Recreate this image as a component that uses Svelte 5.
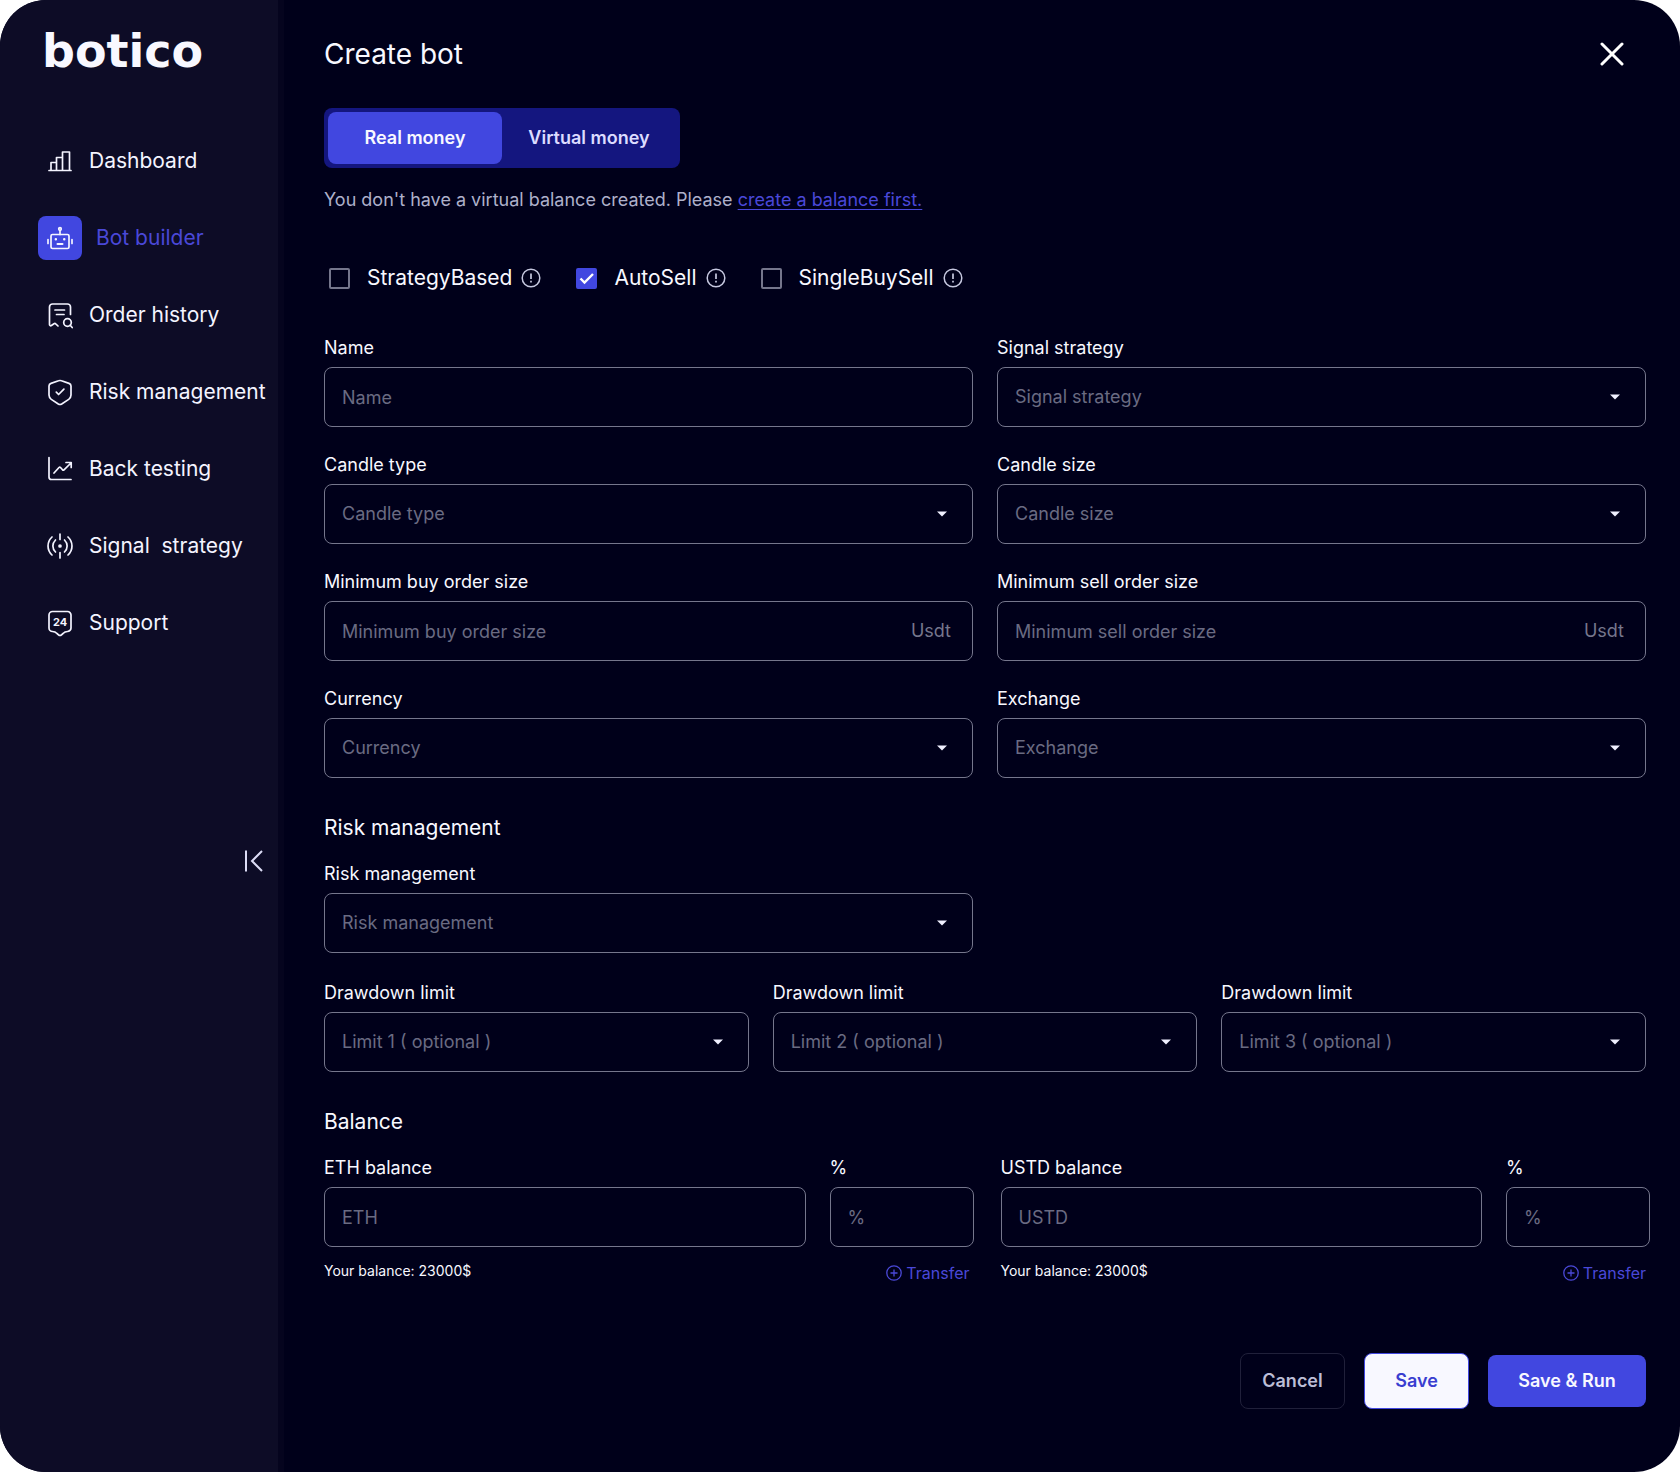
<script>
  let money = "real";
  let active = "bot";

  const menu = [
    { id: "dashboard", label: "Dashboard" },
    { id: "bot", label: "Bot builder" },
    { id: "history", label: "Order history" },
    { id: "risk", label: "Risk management" },
    { id: "testing", label: "Back testing" },
    { id: "signal", label: "Signal \u00a0strategy" },
    { id: "support", label: "Support" },
  ];

  let modes = [
    { label: "StrategyBased", checked: false },
    { label: "AutoSell", checked: true },
    { label: "SingleBuySell", checked: false },
  ];

  const fields = [
    { id: "name", label: "Name", type: "text" },
    { id: "signal-strategy", label: "Signal strategy", type: "select" },
    { id: "candle-type", label: "Candle type", type: "select" },
    { id: "candle-size", label: "Candle size", type: "select" },
    { id: "min-buy", label: "Minimum buy order size", type: "text", unit: "Usdt" },
    { id: "min-sell", label: "Minimum sell order size", type: "text", unit: "Usdt" },
    { id: "currency", label: "Currency", type: "select" },
    { id: "exchange", label: "Exchange", type: "select" },
  ];

  const limits = [1, 2, 3];
  const balances = ["ETH", "USTD"];
</script>

{#snippet dropdown(id, label, placeholder)}
  <div class="field">
    <label for={id}>{label}</label>
    <div class="control">
      <select {id}>
        <option>{placeholder}</option>
      </select>
      <svg class="caret" width="10" height="6" viewBox="0 0 10 6" aria-hidden="true">
        <path d="M0 0.5h10L5 5.5z" fill="#f0f0ff" />
      </svg>
    </div>
  </div>
{/snippet}

{#snippet textbox(id, label, placeholder, unit)}
  <div class="field">
    <label for={id}>{label}</label>
    <div class="control">
      <input {id} type="text" {placeholder} />
      {#if unit}<span class="unit">{unit}</span>{/if}
    </div>
  </div>
{/snippet}

<div class="app">
  <aside>
    <a class="logo" href="#home">botico</a>

    <nav>
      {#each menu as item}
        <a
          href={"#" + item.id}
          class:active={active === item.id}
          on:click={() => (active = item.id)}>
          <span class="icon">
            <svg width="28" height="28" viewBox="0 0 28 28" fill="none" stroke="currentColor" stroke-width="1.7" stroke-linecap="round" stroke-linejoin="round" aria-hidden="true">
              {#if item.id === "dashboard"}
                <path d="M3 23.5h22M5 23.5v-8h5.500M10.500 23.500v-13h6M16.500 23.500V5h7v18.500" />
              {:else if item.id === "bot"}
                <rect x="5" y="10.500" width="18" height="14" rx="1.500" />
                <circle cx="14" cy="5" r="1.300" />
                <path d="M14 6.500v4M2 15.500v4M26 15.500v4" />
                <path d="M11.500 20h5" stroke-width="2" />
                <path d="M9.800 15.200h.1M18.200 15.200h.1" stroke-width="2.400" />
              {:else if item.id === "history"}
                <path d="M24.500 13.500V6a3 3 0 0 0-3-3H6.500a3 3 0 0 0-3 3v17.500c0 1 1 1.700 1.900 1l2.600-1.800c.6-.4 1.200-.4 1.700.1l2.300 2.200" />
                <path d="M9 9h9.500M10.500 13.500H18" />
                <circle cx="21.500" cy="21.500" r="3.800" />
                <path d="M24.200 24.200l2 2.300" />
              {:else if item.id === "risk"}
                <path d="M12.500 2.800c1-.4 2-.4 3 0l7.500 2.600c1.200.4 2 1.500 2 2.700v9c0 1.700-.9 3.300-2.300 4.300l-7 4.600c-1 .6-2.400.6-3.400 0l-7-4.600C3.900 20.400 3 18.800 3 17.100v-9c0-1.200.8-2.300 2-2.700z" />
                <path d="M10.300 14.200l2.300 2.300 5.300-5.300" />
              {:else if item.id === "testing"}
                <path d="M3 2.500V22a2.500 2.500 0 0 0 2.500 2.500H25" />
                <path d="M8 18l5-5.500c.5-.5 1-.5 1.500 0l2 2.300c.5.500 1 .5 1.500 0L25 8M20 7.500h5.200v5" />
              {:else if item.id === "signal"}
                <path d="M14 2v5.500M14 20.500V26M6 5c-5.300 5-5.300 13 0 18M22 5c5.300 5 5.300 13 0 18M9.500 8c-3.500 3.500-3.500 8.500 0 12M18.500 8c3.500 3.500 3.500 8.500 0 12" />
                <circle cx="14" cy="14" r="1" fill="currentColor" />
              {:else}
                <path d="M6.500 2.500h15A3.500 3.500 0 0 1 25 6v13a3.500 3.500 0 0 1-3.500 3.500c-2.500 0-3 .4-4.500 2l-1.500 1.300c-.9.800-2.100.8-3 0L11 24.500c-1.500-1.600-2-2-4.500-2A3.500 3.500 0 0 1 3 19V6a3.500 3.500 0 0 1 3.500-3.500z" />
                <text x="14" y="17" text-anchor="middle" font-size="11" font-weight="700" fill="currentColor" stroke="none">24</text>
              {/if}
            </svg>
          </span>
          {item.label}
        </a>
      {/each}
    </nav>

    <button class="collapse" aria-label="Collapse menu">
      <svg width="20" height="24" viewBox="0 0 20 24" fill="none" stroke="#dcdcf5" stroke-width="2" aria-hidden="true">
        <path d="M2 1.500v21M18 2L8 12l10 10" />
      </svg>
    </button>
  </aside>

  <main>
    <header>
      <h1>Create bot</h1>
      <button class="close" aria-label="Close">
        <svg width="24" height="24" viewBox="0 0 24 24" fill="none" stroke="#fff" stroke-width="3" stroke-linecap="round" aria-hidden="true">
          <path d="M2 2l20 20M22 2L2 22" />
        </svg>
      </button>
    </header>

    <div class="toggle">
      <button class:on={money === "real"} on:click={() => (money = "real")}>Real money</button>
      <button class:on={money === "virtual"} on:click={() => (money = "virtual")}>Virtual money</button>
    </div>

    <p class="note">
      You don't have a virtual balance created. Please <a href="#balance">create a balance first.</a>
    </p>

    <div class="modes">
      {#each modes as mode}
        <label>
          <span class="check">
            <input type="checkbox" bind:checked={mode.checked} />
            <svg width="21" height="21" viewBox="0 0 21 21" fill="none" stroke="#fff" stroke-width="2.400" aria-hidden="true">
              <path d="M4.500 10.500l4 4L17 6" />
            </svg>
          </span>
          {mode.label}
          <svg width="20" height="20" viewBox="0 0 20 20" fill="none" stroke="#c6c8e0" stroke-width="1.500" aria-hidden="true">
            <circle cx="10" cy="10" r="8.800" />
            <path d="M10 5.500v5.500M10 12.800v1.700" stroke-width="1.700" />
          </svg>
        </label>
      {/each}
    </div>

    <form on:submit|preventDefault>
      <div class="grid two">
        {#each fields as f}
          {#if f.type === "select"}
            {@render dropdown(f.id, f.label, f.label)}
          {:else}
            {@render textbox(f.id, f.label, f.label, f.unit)}
          {/if}
        {/each}
      </div>

      <h2>Risk management</h2>
      <div class="grid two">
        {@render dropdown("risk-management", "Risk management", "Risk management")}
      </div>
      <div class="grid three">
        {#each limits as n}
          {@render dropdown("limit-" + n, "Drawdown limit", `Limit ${n} ( optional )`)}
        {/each}
      </div>

      <h2>Balance</h2>
      <div class="balances">
        {#each balances as coin}
          <div>
            <div class="grid amount">
              {@render textbox(coin + "-amount", coin + " balance", coin)}
              {@render textbox(coin + "-percent", "%", "%")}
            </div>
            <div class="below">
              <span>Your balance: 23000$</span>
              <button type="button" class="transfer">
                <svg width="16" height="16" viewBox="0 0 16 16" fill="none" stroke="currentColor" stroke-width="1.300" aria-hidden="true">
                  <circle cx="8" cy="8" r="7.200" />
                  <path d="M8 4.500v7M4.500 8h7" />
                </svg>
                Transfer
              </button>
            </div>
          </div>
        {/each}
      </div>

      <div class="actions">
        <button type="button" class="cancel">Cancel</button>
        <button type="button" class="save">Save</button>
        <button type="submit" class="run">Save &amp; Run</button>
      </div>
    </form>
  </main>
</div>

<style>
  :global(body) {
    background: #fff;
  }

  .app {
    display: flex;
    min-height: 100vh;
    border-radius: 46px;
    overflow: hidden;
    background: #00001a;
    color: #f8f8ff;
    font-family: Inter, "Liberation Sans", sans-serif;
    font-size: 18px;
    line-height: 24px;
  }

  .app * {
    box-sizing: border-box;
  }

  button,
  input,
  select {
    font: inherit;
    color: inherit;
    margin: 0;
    padding: 0;
    border: 0;
    background: none;
  }

  button {
    cursor: pointer;
  }

  svg {
    display: block;
    flex: none;
  }

  aside {
    flex: none;
    width: 284px;
    display: flex;
    flex-direction: column;
    border-right: 6px solid #05041e;
    background: #0d0c26;
  }

  .logo {
    margin: 25px 0 0 42px;
    font-family: "DejaVu Sans", sans-serif;
    font-size: 46px;
    font-weight: 700;
    line-height: 52px;
    color: #f8f8ff;
    text-decoration: none;
  }

  nav {
    display: flex;
    flex-direction: column;
    gap: 33px;
    margin: 62px 0 0 38px;
  }

  nav a {
    display: flex;
    align-items: center;
    gap: 7px;
    height: 44px;
    font-size: 21px;
    white-space: nowrap;
    color: #f4f4ff;
    text-decoration: none;
  }

  nav a.active {
    gap: 14px;
    color: #4a48d8;
  }

  .icon {
    display: grid;
    place-items: center;
    width: 44px;
    height: 44px;
    border-radius: 8px;
    color: #f4f4ff;
  }

  .active .icon {
    background: #4147e0;
  }

  .collapse {
    align-self: flex-end;
    margin: 204px 14px 0 0;
  }

  main {
    flex: 1;
    min-width: 0;
    padding: 36px 34px 63px 40px;
  }

  header {
    display: flex;
    justify-content: space-between;
    align-items: center;
    padding-right: 22px;
  }

  h1 {
    margin: 0;
    font-size: 28px;
    font-weight: 400;
    line-height: 36px;
  }

  .toggle {
    display: inline-flex;
    height: 60px;
    margin-top: 36px;
    padding: 4px;
    border-radius: 8px;
    background: #14167f;
  }

  .toggle button {
    width: 174px;
    border-radius: 8px;
    font-weight: 600;
    color: #dcdcff;
  }

  .toggle .on {
    background: #4147e0;
    color: #f8f8ff;
  }

  .note {
    margin: 20px 0 0;
    color: #aeb0ca;
  }

  .note a {
    color: #4a48d8;
    text-underline-offset: 3px;
  }

  .modes {
    display: flex;
    gap: 35px;
    margin: 52px 0 0 5px;
  }

  .modes label {
    display: flex;
    align-items: center;
    gap: 9px;
    line-height: 28px;
    font-size: 21px;
  }

  .check {
    display: grid;
    margin-right: 8px;
  }

  .check input,
  .check svg {
    grid-area: 1 / 1;
  }

  .check input {
    appearance: none;
    width: 21px;
    height: 21px;
    border: 2px solid #75768c;
    border-radius: 2px;
  }

  .check input:checked {
    border-color: #4147e0;
    background: #4147e0;
  }

  .check svg {
    visibility: hidden;
    pointer-events: none;
  }

  .check input:checked + svg {
    visibility: visible;
  }

  form {
    margin-top: 44px;
  }

  .grid {
    display: grid;
    gap: 26px 24px;
  }

  .two {
    grid-template-columns: repeat(2, 1fr);
  }

  .three {
    grid-template-columns: repeat(3, 1fr);
    margin-top: 28px;
  }

  .amount {
    grid-template-columns: 1fr 144px;
  }

  .field {
    display: flex;
    flex-direction: column;
    gap: 7px;
    min-width: 0;
  }

  .control {
    display: grid;
    grid-template-columns: 1fr auto;
    align-items: center;
    height: 60px;
    border: 1px solid #75768c;
    border-radius: 8px;
  }

  .control input,
  .control select {
    grid-area: 1 / 1 / 2 / 3;
    appearance: none;
    width: 100%;
    min-width: 0;
    height: 100%;
    padding: 0 17px;
    color: #6a6b82;
  }

  .control input::placeholder {
    color: #6a6b82;
    opacity: 1;
  }

  .caret,
  .unit {
    grid-area: 1 / 2;
    pointer-events: none;
  }

  .caret {
    margin-right: 25px;
  }

  .unit {
    margin-right: 21px;
    color: #75768c;
  }

  h2 {
    margin: 36px 0 20px;
    font-size: 21px;
    font-weight: 400;
    line-height: 28px;
  }

  .balances {
    display: grid;
    grid-template-columns: repeat(2, 1fr);
    gap: 27px;
    margin-right: -4px;
  }

  .below {
    display: flex;
    justify-content: space-between;
    margin-top: 12px;
    padding-right: 4px;
    font-size: 14px;
  }

  .transfer {
    display: flex;
    align-items: center;
    gap: 4px;
    margin-top: 2px;
    font-size: 16px;
    color: #4a48d8;
  }

  .actions {
    display: flex;
    justify-content: flex-end;
    align-items: center;
    gap: 19px;
    margin-top: 68px;
    font-weight: 600;
  }

  .actions button {
    width: 105px;
    height: 56px;
    border-radius: 8px;
  }

  .cancel {
    border: 1px solid #20203a;
    color: #bcbdd6;
  }

  .save {
    border: 1px solid #4147e0;
    background: #f8f8ff;
    color: #3a3ed0;
  }

  .actions .run {
    width: 158px;
    height: 52px;
    background: #4147e0;
  }
</style>
